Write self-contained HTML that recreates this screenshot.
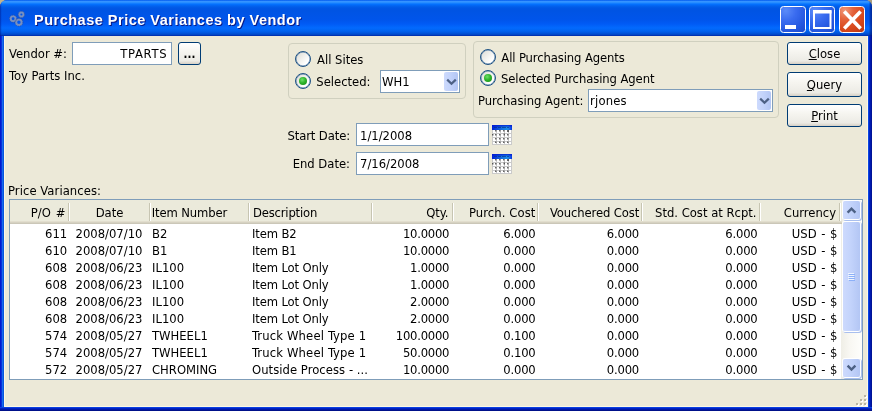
<!DOCTYPE html>
<html lang="en">
<head>
<meta charset="utf-8">
<title>Purchase Price Variances by Vendor</title>
<style>
html,body{margin:0;padding:0;}
body{width:872px;height:411px;overflow:hidden;position:relative;background:#0831d9;will-change:transform;
  font-family:"DejaVu Sans Condensed","Liberation Sans",sans-serif;font-size:12.9px;color:#000;}
.abs{position:absolute;}
.t{position:absolute;white-space:pre;line-height:16px;height:16px;}
.r{text-align:right;}
.c{text-align:center;}
#corners{position:absolute;left:0;top:0;width:872px;height:12px;background:#a89d80;}
#cornerL{position:absolute;left:0;top:0;width:12px;height:12px;background:#c2b48c;}
#frame{position:absolute;left:0;top:0;width:872px;height:411px;border-radius:7px 7px 0 0;
  background:linear-gradient(to right,#0019cf 0,#0019cf 1px,#0831d9 1px,#0831d9 2px,#166aee 2px,#166aee 3px,#0855dd 3px,#0855dd 868px,#0a46e2 868px,#0a46e2 869px,#0024c6 869px,#0024c6 870px,#001aaf 870px,#001aaf 871px,#001496 871px);}
#bottom{position:absolute;left:0;top:407px;width:872px;height:4px;
  background:linear-gradient(to bottom,#0a40e0 0,#0a40e0 1px,#0022c4 1px,#0022c4 2px,#0018a8 2px,#0018a8 3px,#00118a 3px);}
#title{position:absolute;left:0;top:0;width:872px;height:36px;border-radius:7px 7px 0 0;
  background:linear-gradient(to bottom,#0058ee 0px,#3593ff 1.5px,#288eff 2.5px,#127dff 3.5px,#036ffc 4.5px,#0262ee 6px,#0057e5 8px,#0054e3 10px,#0055eb 20px,#005bf5 24px,#026afe 28px,#0062ef 31px,#0055dd 33px,#0048c8 34.5px,#0034b4 35px,#0030b0 36px);}
#ttext{position:absolute;left:34px;top:9.5px;font-family:"Liberation Sans",sans-serif;font-weight:bold;font-size:14.5px;line-height:20px;color:#fff;
  letter-spacing:0.5px;text-shadow:1px 1px 0 #0a1883;white-space:pre;}
#client{position:absolute;left:4px;top:36px;width:864px;height:371px;background:#ece9d8;box-sizing:border-box;border:1px solid #fbf7e6;border-top:none;}
.inp{position:absolute;background:#fff;border:1px solid #7f9db9;box-sizing:border-box;}
.btn{position:absolute;box-sizing:border-box;border:1px solid #003c74;border-radius:3px;
  background:linear-gradient(to bottom,#ffffff 0%,#f6f5f0 40%,#ecebe5 85%,#d6d0c5 100%);text-align:center;}
.btn span{position:absolute;left:0;right:0;white-space:pre;line-height:16px;}
.btn u{text-decoration:underline;text-underline-offset:1px;}
.grp{position:absolute;box-sizing:border-box;border:1px solid #d0d0bf;border-radius:4px;}
.radio{position:absolute;width:16px;height:16px;box-sizing:border-box;border-radius:50%;border:1px solid #1f5283;
  background:linear-gradient(135deg,#d9d9d3 0%,#eeeeea 40%,#ffffff 75%);box-shadow:inset 0 0 0 0.5px #5f86ad;}
.radio.on::after{content:"";position:absolute;left:3px;top:3px;width:8px;height:8px;border-radius:50%;
  background:radial-gradient(circle at 40% 35%,#6ee068 0%,#2fb42c 45%,#1d991b 80%,#2a9a2a 100%);}
.cbtn{position:absolute;box-sizing:border-box;width:14px;height:19px;border-radius:2px;
  background:linear-gradient(to right,#cddafd 0%,#c3d3fb 45%,#b3c6f4 100%);box-shadow:0 0 0 1px #fff;}
.cbtn svg,.sbtn svg{position:absolute;left:0;top:0;}

.row{position:absolute;left:0;height:17px;width:862px;}
.row span,.hd span{position:absolute;top:0;white-space:pre;line-height:17px;height:17px;}
.c1{left:10px;width:57.2px;text-align:right;}
.c2{left:69px;width:80px;text-align:center;}
.c3{left:152px;}
.c4{left:252px;letter-spacing:-0.13px;}
.c5{left:372px;width:77.2px;text-align:right;letter-spacing:-0.25px;}
.c6{left:453px;width:82.5px;text-align:right;letter-spacing:-0.2px;}
.c7{left:538px;width:101px;text-align:right;letter-spacing:-0.2px;}
.c8{left:643px;width:114.5px;text-align:right;letter-spacing:-0.2px;}
.c9{left:760px;width:77.5px;text-align:right;}
.hd{position:absolute;left:10px;top:200px;width:832px;height:24px;box-sizing:border-box;background:#ebeadb;
  border-bottom:1px solid #cbc7b8;box-shadow:inset 0 -1px 0 #d6d2c2,inset 0 -2px 0 #e2dece;}
.hd span{top:4px;}
.hd i{position:absolute;top:3px;width:1px;height:18px;background:#c7c5b2;border-right:1px solid #fff;}
.sb{position:absolute;left:841px;top:200px;width:21px;height:179px;background:linear-gradient(to right,#efeee6 0%,#f8f7f2 40%,#fefefc 100%);}
.sbtn{position:absolute;left:2px;width:17px;height:18px;box-sizing:border-box;border-radius:2px;
  background:linear-gradient(to right,#cddafd 0%,#c3d3fb 45%,#b3c6f4 100%);box-shadow:0 0 0 1px #fff,1px 1px 0 1px #a9bfee;}
.thumb{position:absolute;left:2px;top:22px;width:17px;height:109px;box-sizing:border-box;border-radius:2px;
  background:linear-gradient(to right,#cddafd 0%,#c3d3fb 45%,#b3c6f4 100%);box-shadow:0 0 0 1px #fff,1px 1px 0 1px #a9bfee;}
.thumb i{position:absolute;left:5px;width:6px;height:1px;background:#eef4fe;box-shadow:1px 1px 0 #8cb0f8;}

.cap{position:absolute;top:6px;width:26.3px;height:27px;box-sizing:border-box;border:1px solid #fff;border-radius:3.5px;
  background:radial-gradient(circle at 20% 15%,#5b8bf8 0%,#3a6cf0 35%,#2558e0 70%,#1c49cc 100%);}
.cap.x{background:radial-gradient(circle at 20% 15%,#f0987a 0%,#e4623a 30%,#d8481c 65%,#b93612 100%);}
.cap svg{position:absolute;left:-1px;top:-1px;}
.c9{word-spacing:1px;}
</style>
</head>
<body>
<div id="corners"></div><div id="cornerL"></div>
<div id="frame"></div>
<div id="title"></div>
<div id="bottom"></div>
<div class="abs" style="left:0;top:0;width:872px;height:36px;border-radius:7px 7px 0 0;background:linear-gradient(to right,rgba(0,10,120,0.55) 0,rgba(0,10,120,0.15) 1px,rgba(0,0,0,0) 2px,rgba(0,0,0,0) 869px,rgba(0,10,110,0.35) 870px,rgba(0,10,100,0.6) 872px);"></div>
<div id="ttext">Purchase Price Variances by Vendor</div>
<div id="client"></div>
<div class="cap" style="left:780px;"><svg width="26" height="27" viewBox="0 0 26 27"><rect x="5" y="19" width="11" height="4" fill="#fff"/></svg></div>
<div class="cap" style="left:809.2px;"><svg width="26" height="27" viewBox="0 0 26 27"><path d="M5 5.5 H21.5 V22 H5 Z M5 4 V7" fill="none" stroke="#fff" stroke-width="2"/><rect x="4" y="4" width="18.5" height="3.5" fill="#fff"/></svg></div>
<div class="cap x" style="left:838.6px;"><svg width="26" height="27" viewBox="0 0 26 27"><path d="M5.2 5.6 L21.6 22.6 M21.6 5.6 L5.2 22.6" fill="none" stroke="#fff" stroke-width="3.6"/></svg></div>
<svg class="abs" style="left:6px;top:8px;" width="24" height="22" viewBox="0 0 24 22">
<g fill="none" stroke="#7890c0" stroke-width="2.1"><circle cx="7.1" cy="10.7" r="2.5"/><circle cx="15.4" cy="6.5" r="2.1"/><circle cx="12.9" cy="14.3" r="2.8"/></g>
<g fill="none" stroke="#2c4c9c" stroke-width="0.8" stroke-dasharray="1 1" opacity="0.9"><circle cx="7.1" cy="10.7" r="3.7"/><circle cx="15.4" cy="6.5" r="3.2"/><circle cx="12.9" cy="14.3" r="4"/></g>
</svg>
<svg class="abs" style="left:855px;top:394px;" width="12" height="12" viewBox="0 0 12 12">
<g fill="#fff"><rect x="10" y="2" width="2" height="2"/><rect x="6" y="6" width="2" height="2"/><rect x="10" y="6" width="2" height="2"/><rect x="2" y="10" width="2" height="2"/><rect x="6" y="10" width="2" height="2"/><rect x="10" y="10" width="2" height="2"/></g>
<g fill="#b8b4a2"><rect x="9" y="1" width="2" height="2"/><rect x="5" y="5" width="2" height="2"/><rect x="9" y="5" width="2" height="2"/><rect x="1" y="9" width="2" height="2"/><rect x="5" y="9" width="2" height="2"/><rect x="9" y="9" width="2" height="2"/></g>
</svg>
<svg class="abs" style="left:492px;top:125px;" width="20" height="20" viewBox="0 0 20 20">
<defs><linearGradient id="cg1" x1="0" y1="0" x2="1" y2="0"><stop offset="0" stop-color="#0020d8"/><stop offset="0.55" stop-color="#1478e0"/><stop offset="0.8" stop-color="#1a8ce8"/><stop offset="1" stop-color="#0a30e0"/></linearGradient></defs>
<rect x="0" y="0" width="20" height="20" fill="#fff"/>
<rect x="0" y="0" width="20" height="5" fill="url(#cg1)"/>
<rect x="0" y="0" width="20" height="1.5" fill="#0018d0" opacity="0.7"/>
<path d="M2 2.5H5M6 2.5H9M10 2.5H14M15 2.5H17" stroke="#062a80" stroke-width="1" opacity="0.6"/>
<g stroke="#a8a8a8" stroke-width="1" opacity="0.6"><path d="M0 8.5H20M0 12.5H20M0 16.5H20M0 19.5H20"/><path d="M0.5 5V20M4.5 5V20M8.5 5V20M12.5 5V20M16.5 5V20M19.5 5V20"/></g>
<g fill="#333" opacity="0.75"><rect x="3" y="5" width="1.5" height="1.5"/><rect x="7" y="5" width="1.5" height="1.5"/><rect x="11" y="5" width="1.5" height="1.5"/><rect x="15" y="5" width="2" height="2"/>
<rect x="0" y="9" width="1.5" height="1.5"/><rect x="3" y="9" width="1.5" height="1.5"/><rect x="7" y="9" width="1.5" height="1.5"/><rect x="11.5" y="8.5" width="1.5" height="2"/><rect x="15" y="9" width="1.5" height="1.5"/>
<rect x="3" y="13" width="1.5" height="1.5"/><rect x="7" y="13" width="1.5" height="1.5"/><rect x="11" y="13" width="1.5" height="1.5"/><rect x="15" y="13" width="1.5" height="1.5"/>
<rect x="3" y="16.5" width="1.5" height="1.5"/><rect x="7" y="16.5" width="1.5" height="1.5"/><rect x="11" y="16.5" width="1.5" height="1.5"/><rect x="15" y="16.5" width="1.5" height="1.5"/></g>
</svg>
<svg class="abs" style="left:492px;top:154px;" width="20" height="20" viewBox="0 0 20 20">
<defs><linearGradient id="cg2" x1="0" y1="0" x2="1" y2="0"><stop offset="0" stop-color="#0020d8"/><stop offset="0.55" stop-color="#1478e0"/><stop offset="0.8" stop-color="#1a8ce8"/><stop offset="1" stop-color="#0a30e0"/></linearGradient></defs>
<rect x="0" y="0" width="20" height="20" fill="#fff"/>
<rect x="0" y="0" width="20" height="5" fill="url(#cg2)"/>
<rect x="0" y="0" width="20" height="1.5" fill="#0018d0" opacity="0.7"/>
<path d="M2 2.5H5M6 2.5H9M10 2.5H14M15 2.5H17" stroke="#062a80" stroke-width="1" opacity="0.6"/>
<g stroke="#a8a8a8" stroke-width="1" opacity="0.6"><path d="M0 8.5H20M0 12.5H20M0 16.5H20M0 19.5H20"/><path d="M0.5 5V20M4.5 5V20M8.5 5V20M12.5 5V20M16.5 5V20M19.5 5V20"/></g>
<g fill="#333" opacity="0.75"><rect x="3" y="5" width="1.5" height="1.5"/><rect x="7" y="5" width="1.5" height="1.5"/><rect x="11" y="5" width="1.5" height="1.5"/><rect x="15" y="5" width="2" height="2"/>
<rect x="0" y="9" width="1.5" height="1.5"/><rect x="3" y="9" width="1.5" height="1.5"/><rect x="7" y="9" width="1.5" height="1.5"/><rect x="11.5" y="8.5" width="1.5" height="2"/><rect x="15" y="9" width="1.5" height="1.5"/>
<rect x="3" y="13" width="1.5" height="1.5"/><rect x="7" y="13" width="1.5" height="1.5"/><rect x="11" y="13" width="1.5" height="1.5"/><rect x="15" y="13" width="1.5" height="1.5"/>
<rect x="3" y="16.5" width="1.5" height="1.5"/><rect x="7" y="16.5" width="1.5" height="1.5"/><rect x="11" y="16.5" width="1.5" height="1.5"/><rect x="15" y="16.5" width="1.5" height="1.5"/></g>
</svg>


<!-- vendor -->
<div class="t" style="left:9px;top:46px;">Vendor #:</div>
<div class="inp" style="left:72px;top:42px;width:100px;height:23px;"></div>
<div class="t r" style="left:80px;width:87.3px;top:46px;letter-spacing:0.7px;">TPARTS</div>
<div class="btn" style="left:178px;top:42px;width:23px;height:23px;"><span style="top:3px;left:0;font-weight:bold;font-size:11.5px;letter-spacing:0;">...</span></div>
<div class="t" style="left:9px;top:68px;">Toy Parts Inc.</div>

<!-- sites group -->
<div class="grp" style="left:288px;top:43px;width:178px;height:56px;"></div>
<div class="radio" style="left:295px;top:51px;"></div>
<div class="t" style="left:317px;top:52px;">All Sites</div>
<div class="radio on" style="left:295px;top:73px;"></div>
<div class="t" style="left:316.3px;top:74px;">Selected:</div>
<div class="inp" style="left:380px;top:70px;width:80px;height:23px;"></div>
<div class="t" style="left:382px;top:74px;">WH1</div>
<div class="cbtn" style="left:444px;top:72px;"><svg width="14" height="19" viewBox="0 0 14 19"><path d="M3.2 7.6 L7.5 11.8 L11.8 7.6" fill="none" stroke="#4d6185" stroke-width="2.2"/></svg></div>

<!-- agents group -->
<div class="grp" style="left:473px;top:41px;width:306px;height:77px;"></div>
<div class="radio" style="left:480px;top:49px;"></div>
<div class="t" style="left:501.3px;top:50px;letter-spacing:-0.1px;">All Purchasing Agents</div>
<div class="radio on" style="left:480px;top:70px;"></div>
<div class="t" style="left:501px;top:71px;letter-spacing:-0.08px;">Selected Purchasing Agent</div>
<div class="t" style="left:478px;top:93px;">Purchasing Agent:</div>
<div class="inp" style="left:588px;top:89px;width:185px;height:23px;"></div>
<div class="t" style="left:590px;top:93px;letter-spacing:0.2px;">rjones</div>
<div class="cbtn" style="left:757px;top:91px;"><svg width="14" height="19" viewBox="0 0 14 19"><path d="M3.2 7.6 L7.5 11.8 L11.8 7.6" fill="none" stroke="#4d6185" stroke-width="2.2"/></svg></div>

<!-- buttons -->
<div class="btn" style="left:787px;top:42px;width:75px;height:23px;"><span style="top:3px;"><u>C</u>lose</span></div>
<div class="btn" style="left:787px;top:72px;width:75px;height:25px;"><span style="top:4px;"><u>Q</u>uery</span></div>
<div class="btn" style="left:787px;top:104px;width:75px;height:23px;"><span style="top:3px;"><u>P</u>rint</span></div>

<!-- dates -->
<div class="t r" style="left:250px;width:100px;top:128px;letter-spacing:-0.1px;">Start Date:</div>
<div class="inp" style="left:356px;top:123px;width:133px;height:23px;"></div>
<div class="t" style="left:360px;top:128px;">1/1/2008</div>
<div class="t r" style="left:250px;width:100px;top:156px;">End Date:</div>
<div class="inp" style="left:356px;top:152px;width:133px;height:23px;"></div>
<div class="t" style="left:360px;top:156px;">7/16/2008</div>

<!-- table -->
<div class="t" style="left:8px;top:183px;letter-spacing:0.07px;">Price Variances:</div>
<div class="inp" id="tbl" style="left:9px;top:199px;width:854px;height:181px;"></div>

<div class="sb"><div class="sbtn" style="top:1px;"><svg width="17" height="18" viewBox="0 0 17 18"><path d="M4.6 11.6 L8.5 7.7 L12.4 11.6" fill="none" stroke="#4d6185" stroke-width="2.4"/></svg></div>
<div class="thumb"><i style="top:51px;"></i><i style="top:53px;"></i><i style="top:55px;"></i><i style="top:57px;"></i></div>
<div class="sbtn" style="top:159px;"><svg width="17" height="18" viewBox="0 0 17 18"><path d="M4.6 6.6 L8.5 10.5 L12.4 6.6" fill="none" stroke="#4d6185" stroke-width="2.4"/></svg></div></div>
<div class="hd">
<span style="left:0;width:55.5px;text-align:right;word-spacing:1.2px;">P/O #</span><i style="left:58px;"></i>
<span style="left:59.5px;width:80px;text-align:center;">Date</span><i style="left:139px;"></i>
<span style="left:141.7px;letter-spacing:-0.1px;">Item Number</span><i style="left:238px;"></i>
<span style="left:243px;letter-spacing:-0.18px;">Description</span><i style="left:361px;"></i>
<span style="left:362px;width:76.5px;text-align:right;">Qty.</span><i style="left:442px;"></i>
<span style="left:443px;width:82.5px;text-align:right;letter-spacing:0.1px;">Purch. Cost</span><i style="left:527px;"></i>
<span style="left:528px;width:101.2px;text-align:right;letter-spacing:-0.1px;">Vouchered Cost</span><i style="left:631px;"></i>
<span style="left:633px;width:113.5px;text-align:right;">Std. Cost at Rcpt.</span><i style="left:749px;"></i>
<span style="left:750px;width:76px;text-align:right;">Currency</span><i style="left:829px;"></i>
</div>
<div class="row" style="top:225px;"><span class="c1">611</span><span class="c2">2008/07/10</span><span class="c3">B2</span><span class="c4">Item B2</span><span class="c5">10.0000</span><span class="c6">6.000</span><span class="c7">6.000</span><span class="c8">6.000</span><span class="c9">USD - $</span></div>
<div class="row" style="top:242px;"><span class="c1">610</span><span class="c2">2008/07/10</span><span class="c3">B1</span><span class="c4">Item B1</span><span class="c5">10.0000</span><span class="c6">0.000</span><span class="c7">0.000</span><span class="c8">0.000</span><span class="c9">USD - $</span></div>
<div class="row" style="top:259px;"><span class="c1">608</span><span class="c2">2008/06/23</span><span class="c3">IL100</span><span class="c4">Item Lot Only</span><span class="c5">1.0000</span><span class="c6">0.000</span><span class="c7">0.000</span><span class="c8">0.000</span><span class="c9">USD - $</span></div>
<div class="row" style="top:276px;"><span class="c1">608</span><span class="c2">2008/06/23</span><span class="c3">IL100</span><span class="c4">Item Lot Only</span><span class="c5">1.0000</span><span class="c6">0.000</span><span class="c7">0.000</span><span class="c8">0.000</span><span class="c9">USD - $</span></div>
<div class="row" style="top:293px;"><span class="c1">608</span><span class="c2">2008/06/23</span><span class="c3">IL100</span><span class="c4">Item Lot Only</span><span class="c5">2.0000</span><span class="c6">0.000</span><span class="c7">0.000</span><span class="c8">0.000</span><span class="c9">USD - $</span></div>
<div class="row" style="top:310px;"><span class="c1">608</span><span class="c2">2008/06/23</span><span class="c3">IL100</span><span class="c4">Item Lot Only</span><span class="c5">2.0000</span><span class="c6">0.000</span><span class="c7">0.000</span><span class="c8">0.000</span><span class="c9">USD - $</span></div>
<div class="row" style="top:327px;"><span class="c1">574</span><span class="c2">2008/05/27</span><span class="c3">TWHEEL1</span><span class="c4" style="letter-spacing:0.15px;">Truck Wheel Type 1</span><span class="c5">100.0000</span><span class="c6">0.100</span><span class="c7">0.000</span><span class="c8">0.000</span><span class="c9">USD - $</span></div>
<div class="row" style="top:344px;"><span class="c1">574</span><span class="c2">2008/05/27</span><span class="c3">TWHEEL1</span><span class="c4" style="letter-spacing:0.15px;">Truck Wheel Type 1</span><span class="c5">50.0000</span><span class="c6">0.100</span><span class="c7">0.000</span><span class="c8">0.000</span><span class="c9">USD - $</span></div>
<div class="row" style="top:361px;"><span class="c1">572</span><span class="c2">2008/05/27</span><span class="c3">CHROMING</span><span class="c4" style="letter-spacing:0.05px;">Outside Process - ...</span><span class="c5">10.0000</span><span class="c6">0.000</span><span class="c7">0.000</span><span class="c8">0.000</span><span class="c9">USD - $</span></div>

</body>
</html>
